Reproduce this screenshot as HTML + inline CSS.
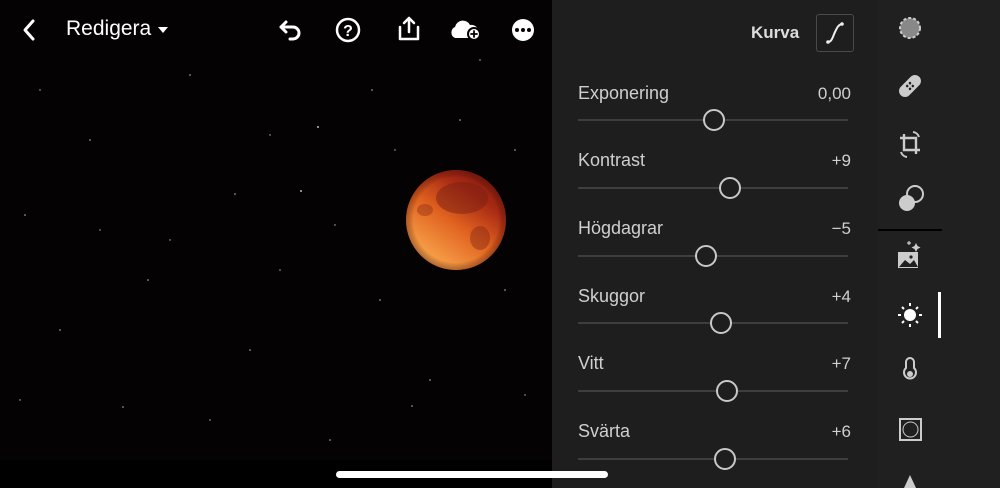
<!DOCTYPE html>
<html><head><meta charset="utf-8"><style>
body{margin:0;width:1000px;height:488px;overflow:hidden;background:#1e1e1e;font-family:"Liberation Sans",sans-serif;position:relative}
.img{position:absolute;left:0;top:0;width:552px;height:460px;background:#050203}
.bot{position:absolute;left:0;top:460px;width:552px;height:28px;background:#000}
.t{position:absolute;color:#fff}
.lab{position:absolute;left:578px;color:#cfcfcf;font-size:18px}
.val{position:absolute;right:149px;color:#cfcfcf;font-size:17px}
.trk{position:absolute;left:578px;width:270px;height:2px;background:#3e3e3e}
.knob{position:absolute;width:18px;height:18px;border:2.5px solid #c8c8c8;border-radius:50%;background:#1e1e1e}
</style></head><body>
<div class="img">
<svg width="552" height="460" style="position:absolute;left:0;top:0">
<g fill="#bbb">
<circle cx="318" cy="127" r="1"/><circle cx="301" cy="191" r="1"/><circle cx="235" cy="194" r="0.8"/><circle cx="148" cy="280" r="0.8"/><circle cx="90" cy="140" r="0.8"/><circle cx="25" cy="215" r="0.8"/><circle cx="190" cy="75" r="0.8"/><circle cx="372" cy="90" r="0.8"/><circle cx="460" cy="120" r="0.8"/><circle cx="515" cy="150" r="0.8"/><circle cx="380" cy="300" r="0.8"/><circle cx="250" cy="350" r="0.8"/><circle cx="60" cy="330" r="0.8"/><circle cx="430" cy="380" r="0.8"/><circle cx="123" cy="407" r="0.8"/><circle cx="412" cy="406" r="0.8"/><circle cx="330" cy="440" r="0.8"/><circle cx="505" cy="290" r="0.8"/><circle cx="170" cy="240" r="0.7"/><circle cx="280" cy="270" r="0.7"/><circle cx="40" cy="90" r="0.7"/><circle cx="350" cy="40" r="0.7"/><circle cx="480" cy="60" r="0.7"/><circle cx="210" cy="420" r="0.7"/><circle cx="525" cy="395" r="0.7"/><circle cx="100" cy="230" r="0.7"/><circle cx="335" cy="225" r="0.7"/><circle cx="270" cy="135" r="0.7"/><circle cx="20" cy="400" r="0.7"/><circle cx="395" cy="150" r="0.7"/>
</g>
<defs>
<linearGradient id="m" x1="0.25" y1="0.9" x2="0.8" y2="0.1"><stop offset="0" stop-color="#f8a24a"/><stop offset="0.45" stop-color="#e0621f"/><stop offset="0.8" stop-color="#a82a14"/><stop offset="1" stop-color="#8a1c10"/></linearGradient>
<radialGradient id="e" cx="50%" cy="50%" r="50%"><stop offset="0.85" stop-color="#000" stop-opacity="0"/><stop offset="1" stop-color="#5a1008" stop-opacity="0.4"/></radialGradient>
</defs>
<circle cx="456" cy="220" r="50" fill="url(#m)"/>
<ellipse cx="462" cy="198" rx="26" ry="16" fill="#7a2012" opacity=".5"/>
<ellipse cx="480" cy="238" rx="10" ry="12" fill="#7a2012" opacity=".4"/>
<ellipse cx="425" cy="210" rx="8" ry="6" fill="#7a2012" opacity=".35"/>
<circle cx="456" cy="220" r="50" fill="url(#e)"/>
</svg>
</div>
<div class="bot"></div>
<div style="position:absolute;left:336px;top:471px;width:272px;height:7px;border-radius:4px;background:#fff"></div>
<svg width="560" height="60" style="position:absolute;left:0;top:0" fill="none" stroke="#fff" stroke-width="3" stroke-linecap="round" stroke-linejoin="round">
<path d="M33 21l-8 9 8 9"/>
<path d="M158 27h10l-5 6z" fill="#fff" stroke="none"/>
<path d="M286 22l-5 5 5 5M281 27h12a6 6 0 0 1 0 12h-3"/>
<circle cx="348" cy="30" r="11" stroke-width="2.5"/>
<text x="348" y="36" font-size="16" font-weight="bold" fill="#fff" stroke="none" text-anchor="middle" font-family="Liberation Sans">?</text>
<path d="M400 27v12h18V27M409 32V18M404 23l5-5 5 5" stroke-width="2.5"/>
<path d="M455 38a6 6 0 0 1 0-11 8 8 0 0 1 15-2 6 6 0 0 1 3 13z" fill="#fff" stroke="none"/>
<circle cx="474" cy="34" r="6" fill="#fff" stroke="#050203" stroke-width="2"/>
<path d="M474 31v6M471 34h6" stroke="#050203" stroke-width="1.8"/>
<circle cx="523" cy="30" r="11" fill="#fff" stroke="none"/>
<g fill="#050203" stroke="none"><circle cx="517" cy="30" r="2"/><circle cx="523" cy="30" r="2"/><circle cx="529" cy="30" r="2"/></g>
</svg>
<div class="t" style="left:66px;top:17px;font-size:21px">Redigera</div>
<div class="t" style="left:751px;top:23px;font-size:17px;font-weight:bold;color:#ddd">Kurva</div>
<div style="position:absolute;left:816px;top:14px;width:36px;height:36px;border:1.5px solid #4a4a4a;border-radius:3px"></div>
<svg width="40" height="40" style="position:absolute;left:816px;top:14px"><path d="M12 28c4 0 5-6 7-10s3-7 7-8" stroke="#eee" stroke-width="2" fill="none" stroke-linecap="round"/><circle cx="12" cy="28" r="1.8" fill="#eee"/><circle cx="26" cy="10" r="1.8" fill="#eee"/></svg>

<div class="lab" style="top:83px">Exponering</div><div class="val" style="top:84px">0,00</div>
<div class="trk" style="top:119px"></div><div class="knob" style="left:703px;top:109px"></div>
<div class="lab" style="top:150px">Kontrast</div><div class="val" style="top:151px">+9</div>
<div class="trk" style="top:187px"></div><div class="knob" style="left:719px;top:177px"></div>
<div class="lab" style="top:218px">Högdagrar</div><div class="val" style="top:219px">−5</div>
<div class="trk" style="top:255px"></div><div class="knob" style="left:695px;top:245px"></div>
<div class="lab" style="top:286px">Skuggor</div><div class="val" style="top:287px">+4</div>
<div class="trk" style="top:322px"></div><div class="knob" style="left:710px;top:312px"></div>
<div class="lab" style="top:353px">Vitt</div><div class="val" style="top:354px">+7</div>
<div class="trk" style="top:390px"></div><div class="knob" style="left:716px;top:380px"></div>
<div class="lab" style="top:421px">Svärta</div><div class="val" style="top:422px">+6</div>
<div class="trk" style="top:458px"></div><div class="knob" style="left:714px;top:448px"></div>

<div style="position:absolute;left:877px;top:0;width:123px;height:488px;background:#202020"></div>
<div style="position:absolute;left:878px;top:229px;width:64px;height:2px;background:#000"></div>
<div style="position:absolute;left:938px;top:292px;width:3px;height:46px;background:#fff"></div>
<svg width="123" height="488" style="position:absolute;left:877px;top:0" fill="none" stroke="#ccc" stroke-width="2">
<circle cx="33" cy="28" r="10" fill="#888" stroke-dasharray="3 2"/>
<g transform="rotate(-45 33 86)"><rect x="20" y="80" width="26" height="12" rx="6" fill="#ccc" stroke="none"/><circle cx="31" cy="84" r="1.3" fill="#202020" stroke="none"/><circle cx="35" cy="84" r="1.3" fill="#202020" stroke="none"/><circle cx="31" cy="88" r="1.3" fill="#202020" stroke="none"/><circle cx="35" cy="88" r="1.3" fill="#202020" stroke="none"/></g>
<path d="M27 134v16h16M23 138h16v16" stroke-width="2.4"/><path d="M36 132a7 7 0 0 1 6 5M30 157a7 7 0 0 1-6-5"/>
<circle cx="38" cy="194" r="8"/><circle cx="30" cy="203" r="8" fill="#ccc" stroke="none"/>
<path d="M21 252h20v16H21z" fill="#ccc" stroke="none"/><path d="M22 267l6-7 5 4 4-4 4 7z" fill="#202020" stroke="none"/><circle cx="34" cy="257" r="1.6" fill="#202020" stroke="none"/><path d="M39 243l1.5 3 3 1.5-3 1.5-1.5 3-1.5-3-3-1.5 3-1.5z" fill="#ccc" stroke="none"/><path d="M32 241v4M30 243h4" stroke-width="1.2"/>
<circle cx="33" cy="315" r="6" fill="#fff" stroke="none"/>
<path d="M33 303v3M33 324v3M21 315h3M42 315h3M25 307l2 2M39 321l2 2M25 323l2-2M39 309l2-2" stroke="#fff"/>
<path d="M29 368v-6a4 4 0 0 1 8 0v6a6 6 0 1 1-8 0z"/><circle cx="33" cy="374" r="3" fill="#ccc" stroke="none"/>
<rect x="23" y="419" width="21" height="21"/><circle cx="33.5" cy="429.5" r="8" fill="#ccc" stroke="none"/><circle cx="33.5" cy="429.5" r="7" fill="#202020" stroke="none"/>
<path d="M33 475l-6 13h12z" fill="#ccc" stroke="none"/>
</svg>
</body></html>
